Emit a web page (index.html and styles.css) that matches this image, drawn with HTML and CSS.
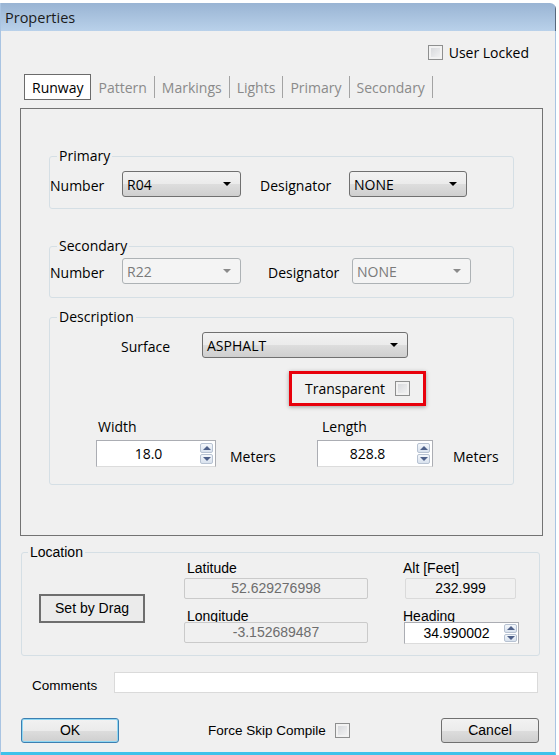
FILE: index.html
```html
<!DOCTYPE html>
<html lang="en">

<head>
    <meta charset="UTF-8">
    <meta name="viewport" content="width=device-width, initial-scale=1.0">
    <title>Properties</title>
    <link rel="stylesheet" href="styles.css">
</head>

<body>
    <div class="window">
        <div class="titlebar">Properties</div>
        <div class="client">
            <div class="lock-row">
                <span class="check"></span>
                <span>User Locked</span>
            </div>

            <div class="tabs">
                <div class="tab active">Runway</div>
                <div class="tab">Pattern</div>
                <div class="tab">Markings</div>
                <div class="tab">Lights</div>
                <div class="tab">Primary</div>
                <div class="tab">Secondary</div>
            </div>

            <div class="page">
                <fieldset class="group primary">
                    <legend>Primary</legend>
                    <div class="row">
                        <span class="lbl lbl-number">Number</span>
                        <div class="combo w-num"><span>R04</span><i class="arrow"></i></div>
                        <span class="lbl lbl-desig">Designator</span>
                        <div class="combo w-desig"><span>NONE</span><i class="arrow"></i></div>
                    </div>
                </fieldset>

                <fieldset class="group secondary">
                    <legend>Secondary</legend>
                    <div class="row">
                        <span class="lbl lbl-number">Number</span>
                        <div class="combo w-num disabled"><span>R22</span><i class="arrow"></i></div>
                        <span class="lbl lbl-desig2">Designator</span>
                        <div class="combo w-desig2 disabled"><span>NONE</span><i class="arrow"></i></div>
                    </div>
                </fieldset>

                <fieldset class="group description">
                    <legend>Description</legend>
                    <div class="row">
                        <span class="lbl lbl-surface">Surface</span>
                        <div class="combo w-surface"><span>ASPHALT</span><i class="arrow"></i></div>
                    </div>

                    <div class="highlight">
                        <span>Transparent</span>
                        <span class="check"></span>
                    </div>

                    <div class="dims">
                        <div class="dim dim-width">
                            <div class="dim-label">Width</div>
                            <div class="dim-row">
                                <div class="spin">
                                    <span class="val">18.0</span>
                                    <span class="spin-btns"><i class="up"></i><i class="down"></i></span>
                                </div>
                                <span class="unit">Meters</span>
                            </div>
                        </div>
                        <div class="dim dim-length">
                            <div class="dim-label">Length</div>
                            <div class="dim-row">
                                <div class="spin">
                                    <span class="val">828.8</span>
                                    <span class="spin-btns"><i class="up"></i><i class="down"></i></span>
                                </div>
                                <span class="unit">Meters</span>
                            </div>
                        </div>
                    </div>
                </fieldset>
            </div>

            <fieldset class="location">
                <legend>Location</legend>
                <div class="loc-body">
                    <div class="loc-drag">
                        <div class="drag-btn">Set by Drag</div>
                    </div>
                    <div class="loc-col loc-coords">
                        <div class="loc-label">Latitude</div>
                        <div class="ro">52.629276998</div>
                        <div class="loc-label second">Longitude</div>
                        <div class="ro">-3.152689487</div>
                    </div>
                    <div class="loc-col loc-alt">
                        <div class="loc-label">Alt [Feet]</div>
                        <div class="ro dark">232.999</div>
                        <div class="loc-label second">Heading</div>
                        <div class="spin small">
                            <span class="val">34.990002</span>
                            <span class="spin-btns"><i class="up"></i><i class="down"></i></span>
                        </div>
                    </div>
                </div>
            </fieldset>

            <div class="comments-row">
                <span class="comments-label">Comments</span>
                <div class="comments-box"></div>
            </div>

            <div class="button-row">
                <div class="btn btn-ok">OK</div>
                <div class="force">
                    <span>Force Skip Compile</span>
                    <span class="check"></span>
                </div>
                <div class="btn btn-cancel">Cancel</div>
            </div>
        </div>
    </div>
</body>

</html>
```

FILE: styles.css
```css
body {
    margin: 0;
    background: #ffffff;
    font-family: 'Open Sans', 'Noto Sans', sans-serif;
    font-size: 14px;
    color: #000;
}

.window {
    margin-top: 3px;
    width: 556px;
    box-sizing: border-box;
    border-left: 1px solid #a9c4e2;
    border-top-right-radius: 6px;
    overflow: hidden;
}

.titlebar {
    height: 28px;
    line-height: 29px;
    padding-left: 4px;
    background: linear-gradient(#99b4d3, #b9d1ea);
    border-right: 1px solid #56677d;
    color: #1b1b1b;
    font-size: 14.5px;
}

.client {
    height: 724px;
    box-sizing: border-box;
    background: #f0f0f0;
    border-right: 1px solid #a9c4e2;
    border-bottom: 3px solid #3fc2ea;
    display: flex;
    flex-direction: column;
}

/* checkbox, Win7 look */
.check {
    display: inline-block;
    width: 15px;
    height: 15px;
    box-sizing: border-box;
    border: 1px solid #8e8f8f;
    background: linear-gradient(135deg, #d2d4d8, #f6f6f6);
    box-shadow: inset 0 0 0 2px #f2f2f2;
}

.lock-row {
    display: flex;
    align-items: center;
    justify-content: flex-end;
    gap: 6px;
    height: 15px;
    margin-top: 14px;
    padding-right: 26px;
}

/* tab strip */
.tabs {
    display: flex;
    height: 26px;
    margin: 14px 0 0 23px;
}

.tab {
    padding: 1px 7px 0;
    margin: 2px 0;
    line-height: 22px;
    border-right: 1px solid #a3a3a3;
    color: #8a8a8a;
}

.tab.active {
    margin: 0;
    line-height: 24px;
    background: #fff;
    border: 1px solid #6b6b6b;
    color: #000;
}

.page {
    width: 523px;
    height: 428px;
    box-sizing: border-box;
    margin: 8px 0 0 19px;
    padding: 37px 0 0 28px;
    border: 1px solid #737373;
}

fieldset {
    margin: 0;
    padding: 0;
    min-width: 0;
    box-sizing: border-box;
    border: 1px solid #d5dfe5;
    border-radius: 3px;
}

.group {
    width: 465px;
}

.group legend {
    margin-left: 7px;
    padding: 0 2px;
    line-height: 20px;
}

.primary {
    padding: 5px 0 11px;
}

.secondary {
    margin-top: 27px;
    padding: 2px 0 13px;
}

.description {
    margin-top: 9px;
    padding: 5px 0 17px;
}

.row {
    display: flex;
    align-items: center;
    height: 26px;
}

.lbl {
    padding-top: 3px;
}

.lbl-number {
    width: 72px;
}

.lbl-desig {
    width: 89px;
    margin-left: 19px;
}

.lbl-desig2 {
    width: 84px;
    margin-left: 27px;
}

.lbl-surface {
    width: 81px;
    margin-left: 71px;
}

/* drop-down boxes */
.combo {
    height: 26px;
    box-sizing: border-box;
    display: flex;
    align-items: center;
    justify-content: space-between;
    padding: 0 9px 0 4px;
    border: 1px solid #707070;
    border-radius: 3px;
    background: linear-gradient(#f2f2f2 0%, #ebebeb 50%, #dddddd 51%, #cfcfcf 100%);
}

.combo .arrow {
    width: 0;
    height: 0;
    border-left: 4px solid transparent;
    border-right: 4px solid transparent;
    border-top: 4px solid #000;
}

.combo.disabled {
    border-color: #adb2b5;
    background: #f4f4f4;
    color: #7a7a7a;
}

.combo.disabled .arrow {
    border-top-color: #8a8a8a;
}

.w-num {
    width: 119px;
}

.w-desig {
    width: 118px;
}

.w-desig2 {
    width: 119px;
}

.w-surface {
    width: 206px;
}

.highlight {
    display: flex;
    align-items: center;
    gap: 10px;
    width: 137px;
    height: 35px;
    box-sizing: border-box;
    margin: 13px 0 0 239px;
    padding-left: 13px;
    border: 3px solid #e8000b;
    box-shadow: 0 1px 4px rgba(0, 0, 0, 0.35);
}

.dims {
    display: flex;
    margin: 12px 0 0 46px;
}

.dim-width {
    width: 221px;
}

.dim-label {
    line-height: 18px;
    padding-left: 2px;
}

.dim-length .dim-label {
    padding-left: 5px;
}

.dim-row {
    display: flex;
    align-items: flex-start;
    margin-top: 4px;
}

.unit {
    margin: 7px 0 0 14px;
}

.dim-length .unit {
    margin-left: 20px;
}

/* numeric up/down */
.spin {
    width: 120px;
    height: 27px;
    box-sizing: border-box;
    display: flex;
    padding: 2px 2px 2px 0;
    background: #fff;
    border: 1px solid #abadb3;
    border-bottom-color: #dcdcdc;
}

.dim-length .spin {
    width: 116px;
}

.spin .val {
    flex: 1;
    text-align: center;
    align-self: center;
}

.spin-btns {
    display: flex;
    flex-direction: column;
    gap: 1px;
    width: 13px;
}

.spin-btns i {
    flex: 1;
    display: flex;
    align-items: center;
    justify-content: center;
    border: 1px solid #b7c2d2;
    border-radius: 2px;
    background: linear-gradient(#f4f7fb, #d9e2ee);
}

.spin-btns i::before {
    content: '';
    border-left: 4px solid transparent;
    border-right: 4px solid transparent;
}

.spin-btns .up::before {
    border-bottom: 4px solid #4e6089;
}

.spin-btns .down::before {
    border-top: 4px solid #4e6089;
}

/* location block, classic font */
.location {
    width: 519px;
    margin: 8px 0 0 20px;
    padding: 0 0 11px;
    font-family: 'Liberation Sans', Arial, sans-serif;
}

.location legend {
    margin-left: 6px;
    padding: 0 2px;
    line-height: 16px;
}

.loc-body {
    display: flex;
}

.loc-drag {
    margin-left: 17px;
}

.drag-btn {
    width: 106px;
    height: 29px;
    box-sizing: border-box;
    margin-top: 34px;
    border: 2px solid #6e6e6e;
    background: #ebebeb;
    text-align: center;
    line-height: 25px;
}

.loc-col {
    display: flex;
    flex-direction: column;
}

.loc-coords {
    width: 184px;
    margin-left: 39px;
}

.loc-alt {
    width: 116px;
    margin-left: 35px;
}

.loc-label {
    line-height: 12px;
    margin-top: 2px;
    padding-left: 3px;
}

.loc-alt .loc-label {
    padding-left: 0;
}

.loc-label.second {
    margin-top: 11px;
}

.ro {
    height: 21px;
    box-sizing: border-box;
    margin-top: 4px;
    border: 1px solid #cacaca;
    border-radius: 2px;
    background: #f0f0f0;
    color: #6d6d6d;
    text-align: center;
    line-height: 19px;
}

.loc-label.second + .ro {
    margin-top: 0;
}

.loc-alt .ro {
    width: 111px;
    margin-left: 2px;
}

.ro.dark {
    color: #000;
    border-color: #dadada;
}

.spin.small {
    width: 115px;
    height: 22px;
    margin: 0 0 0 1px;
    padding: 1px 1px 1px 0;
}

.spin.small .val {
    padding-left: 4px;
}

.comments-row {
    display: flex;
    align-items: center;
    height: 21px;
    margin-top: 16px;
    font-family: 'Liberation Sans', Arial, sans-serif;
    font-size: 13.5px;
}

.comments-label {
    width: 82px;
    margin-left: 31px;
    padding-top: 6px;
}

.comments-box {
    width: 424px;
    height: 21px;
    box-sizing: border-box;
    background: #fff;
    border: 1px solid #dadada;
}

.button-row {
    display: flex;
    align-items: center;
    height: 25px;
    margin-top: 25px;
    font-family: 'Liberation Sans', Arial, sans-serif;
}

.btn {
    width: 98px;
    height: 25px;
    box-sizing: border-box;
    border: 1px solid #707070;
    border-radius: 3px;
    background: linear-gradient(#f2f2f2 0%, #ebebeb 50%, #dddddd 51%, #cfcfcf 100%);
    text-align: center;
    line-height: 23px;
}

.btn-ok {
    margin-left: 20px;
    border-color: #3c7fb1;
    box-shadow: inset 0 0 0 1px #8fd7f3;
}

.btn-cancel {
    margin: 0 16px 0 auto;
}

.force {
    display: flex;
    align-items: center;
    gap: 9px;
    margin-left: 89px;
    font-size: 13.5px;
}
```
